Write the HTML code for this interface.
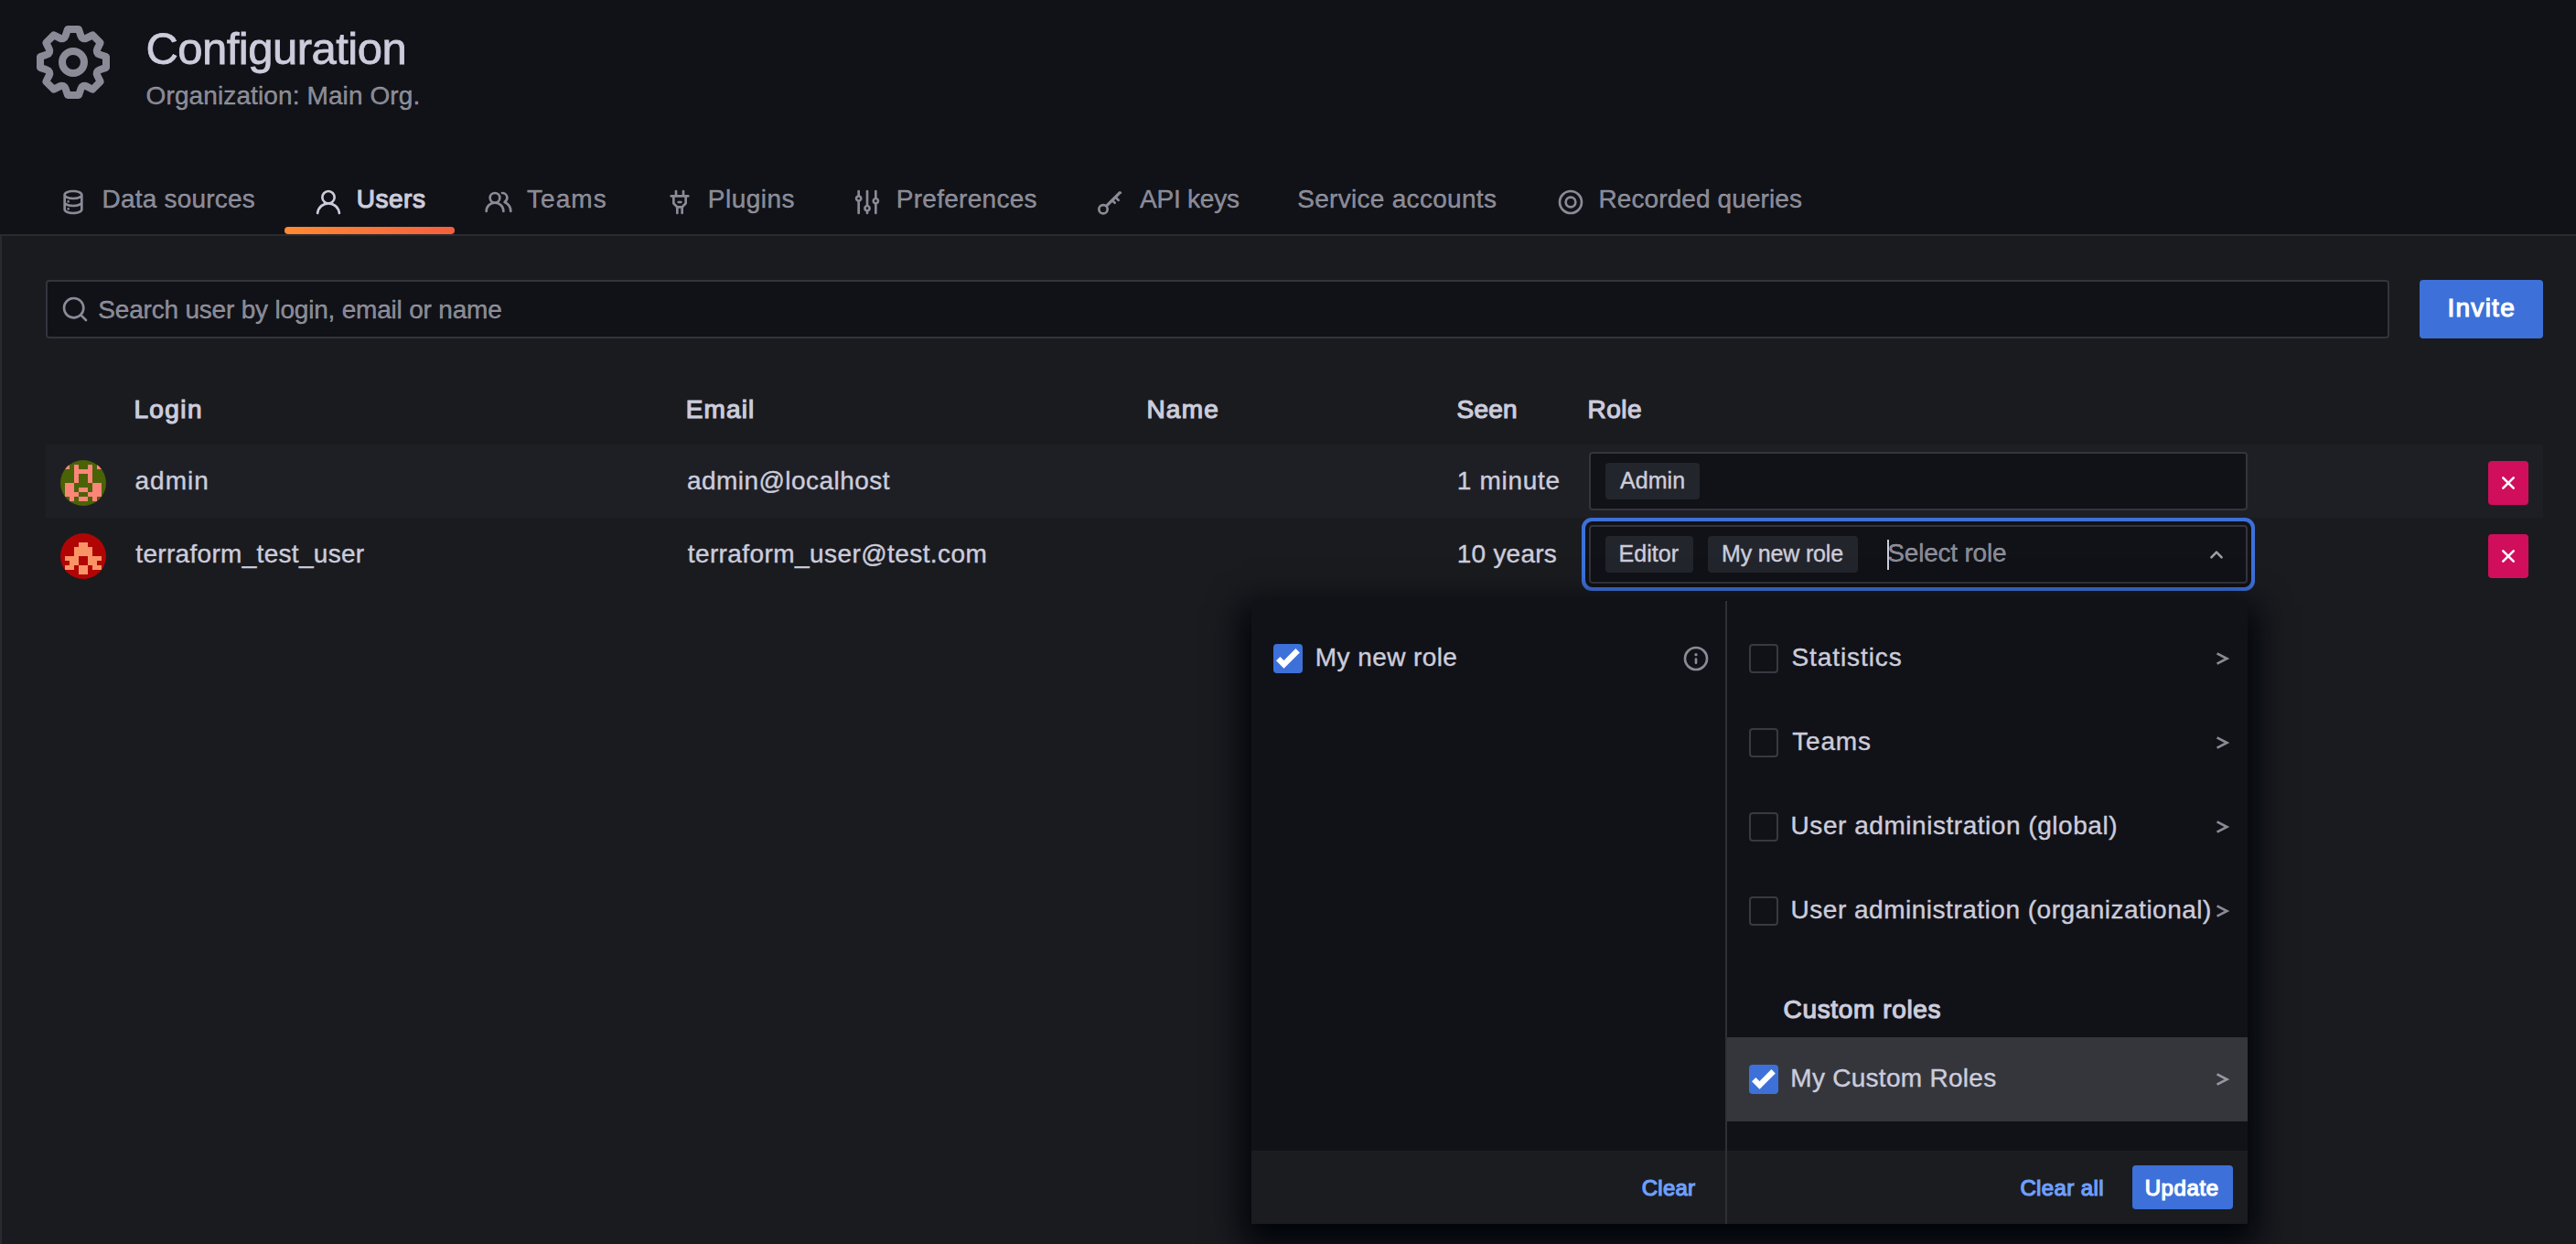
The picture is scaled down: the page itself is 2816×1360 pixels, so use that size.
<!DOCTYPE html>
<html><head><meta charset="utf-8"><style>
html,body{margin:0;padding:0}
body{width:2816px;height:1360px;overflow:hidden;position:relative;background:#1a1b1f;font-family:"Liberation Sans",sans-serif}
.t{position:absolute;line-height:1;white-space:pre;-webkit-text-stroke:0.4px currentColor}
.b{position:absolute}
.ic{position:absolute;overflow:visible}
</style></head><body>
<div class="b" style="left:0px;top:0px;width:2816px;height:256px;background:#111217"></div>
<svg class="ic" style="left:32.0px;top:20.0px;width:96px;height:96px" viewBox="0 0 24 24"><path fill="rgba(204,204,220,0.65)" d="M21.32,9.55l-1.89-.63.89-1.78A1,1,0,0,0,20.13,6L18,3.87a1,1,0,0,0-1.15-.19l-1.78.89-.63-1.89A1,1,0,0,0,13.5,2h-3a1,1,0,0,0-.95.68L8.92,4.57,7.14,3.680A1,1,0,0,0,6,3.87L3.87,6a1,1,0,0,0-.19,1.15l.89,1.78-1.890.63A1,1,0,0,0,2,10.5v3a1,1,0,0,0,.68.95l1.89.63-.89,1.78A1,1,0,0,0,3.87,18L6,20.13a1,1,0,0,0,1.15.19l1.78-.89.63,1.89a1,1,0,0,0,.95.68h3a1,1,0,0,0,.95-.68l.63-1.89,1.78.89A1,1,0,0,0,18,20.13L20.13,18a1,1,0,0,0,.19-1.15l-.89-1.78,1.89-.63A1,1,0,0,0,22,13.5v-3A1,1,0,0,0,21.32,9.55ZM20,12.78l-1.2.4A2,2,0,0,0,17.64,16l.57,1.14-1.1,1.1L16,17.64a2,2,0,0,0-2.79,1.16l-.4,1.2H11.22l-.4-1.2A2,2,0,0,0,8,17.64l-1.14.57-1.1-1.1L6.36,16A2,2,0,0,0,5.2,13.18L4,12.78V11.22l1.2-.4A2,2,0,0,0,6.360,8L5.79,6.89l1.1-1.1L8,6.36A2,2,0,0,0,10.82,5.2l.4-1.2h1.56l.4,1.2A2,2,0,0,0,16,6.36l1.14-.57,1.1,1.1L17.64,8a2,2,0,0,0,1.16,2.79l1.2.4ZM12,8a4,4,0,1,0,4,4A4,4,0,0,0,12,8Zm0,6a2,2,0,1,1,2-2A2,2,0,0,1,12,14Z"/></svg>
<div class="t" style="left:159.4px;top:28.9px;font-size:49px;font-weight:400;color:#ccccdc;letter-spacing:-0.51px;-webkit-text-stroke:0.8px currentColor;">Configuration</div>
<div class="t" style="left:159.6px;top:90.8px;font-size:28px;font-weight:400;color:rgba(204,204,220,0.65);letter-spacing:0.11px;">Organization: Main Org.</div>
<svg class="ic" style="left:63.6px;top:204.8px;width:32px;height:32px" viewBox="0 0 24 24"><path fill="rgba(204,204,220,0.65)" d="M8,16.5a1,1,0,1,0,1,1A1,1,0,0,0,8,16.5ZM12,2C8,2,4,3.37,4,6V18c0,2.63,4,4,8,4s8-1.37,8-4V6C20,3.37,16,2,12,2Zm6,16c0,.71-2.28,2-6,2s-6-1.29-6-2V14.73A13.16,13.16,0,0,0,12,16a13.16,13.16,0,0,0,6-1.27Zm0-6c0,.71-2.28,2-6,2s-6-1.290-6-2V8.73A13.16,13.16,0,0,0,12,10a13.16,13.16,0,0,0,6-1.27ZM12,8C8.28,8,6,6.71,6,6s2.28-2,6-2,6,1.29,6,2S15.72,8,12,8ZM8,10.5a1,1,0,1,0,1,1A1,1,0,0,0,8,10.5Z"/></svg>
<div class="t" style="left:111.6px;top:203.9px;font-size:28px;font-weight:400;color:rgba(204,204,220,0.65);letter-spacing:0.20px;">Data sources</div>
<svg class="ic" style="left:343.0px;top:204.8px;width:32px;height:32px" viewBox="0 0 24 24"><path fill="#ccccdc" d="M15.71,12.71a6,6,0,1,0-7.42,0,10,10,0,0,0-6.22,8.18,1,1,0,0,0,2,.22,8,8,0,0,1,15.9,0,1,1,0,0,0,1,.89h.11a1,1,0,0,0,.88-1.1A10,10,0,0,0,15.71,12.71ZM12,12a4,4,0,1,1,4-4A4,4,0,0,1,12,12Z"/></svg>
<div class="t" style="left:389.8px;top:203.9px;font-size:28px;font-weight:500;color:#ccccdc;letter-spacing:0.50px;-webkit-text-stroke:1.2px currentColor;">Users</div>
<svg class="ic" style="left:528.7px;top:204.8px;width:32px;height:32px" viewBox="0 0 24 24"><path fill="rgba(204,204,220,0.65)" d="M12.3,12.22A4.92,4.92,0,0,0,14,8.5a5,5,0,0,0-10,0,4.92,4.92,0,0,0,1.7,3.72A8,8,0,0,0,1,19.5a1,1,0,0,0,2,0,6,6,0,0,1,12,0,1,1,0,0,0,2,0A8,8,0,0,0,12.3,12.22ZM9,11.5a3,3,0,1,1,3-3A3,3,0,0,1,9,11.5Zm9.74.32A5,5,0,0,0,15,3.5a1,1,0,0,0,0,2,3,3,0,0,1,3,3,3,3,0,0,1-1.5,2.59,1,1,0,0,0-.5.84,1,1,0,0,0,.45.86l.39.26.13.07a7,7,0,0,1,4,6.38,1,1,0,0,0,2,0A9,9,0,0,0,18.74,11.82Z"/></svg>
<div class="t" style="left:576.0px;top:203.9px;font-size:28px;font-weight:400;color:rgba(204,204,220,0.65);letter-spacing:1.04px;">Teams</div>
<svg class="ic" style="left:726.7px;top:204.8px;width:32px;height:32px" viewBox="0 0 24 24"><path fill="rgba(204,204,220,0.65)" d="M19,6H16V3a1,1,0,0,0-2,0V6H10V3A1,1,0,0,0,8,3V6H5A1,1,0,0,0,5,8H6v5a1,1,0,0,0,.29.71L9,16.41V21a1,1,0,0,0,2,0V17h2v4a1,1,0,0,0,2,0V16.41l2.71-2.7A1,1,0,0,0,18,13V8h1a1,1,0,0,0,0-2Zm-3,6.59L13.59,15H10.41L8,12.59V8h8ZM11,13h2a1,1,0,0,0,0-2H11a1,1,0,0,0,0,2Z"/></svg>
<div class="t" style="left:773.8px;top:203.9px;font-size:28px;font-weight:400;color:rgba(204,204,220,0.65);letter-spacing:0.49px;">Plugins</div>
<svg class="ic" style="left:932.3px;top:204.8px;width:32px;height:32px" viewBox="0 0 24 24"><path fill="rgba(204,204,220,0.65)" d="M20,8.18V3a1,1,0,0,0-2,0V8.18a3,3,0,0,0,0,5.64V21a1,1,0,0,0,2,0V13.82a3,3,0,0,0,0-5.64ZM19,12a1,1,0,1,1,1-1A1,1,0,0,1,19,12Zm-6,2.18V3a1,1,0,0,0-2,0V14.18a3,3,0,0,0,0,5.64V21a1,1,0,0,0,2,0V19.82a3,3,0,0,0,0-5.64ZM12,18a1,1,0,1,1,1-1A1,1,0,0,1,12,18ZM6,6.18V3A1,1,0,0,0,4,3V6.18a3,3,0,0,0,0,5.64V21a1,1,0,0,0,2,0V11.82A3,3,0,0,0,6,6.18ZM5,10A1,1,0,1,1,6,9,1,1,0,0,1,5,10Z"/></svg>
<div class="t" style="left:979.8px;top:203.9px;font-size:28px;font-weight:400;color:rgba(204,204,220,0.65);letter-spacing:0.28px;">Preferences</div>
<svg class="ic" style="left:1196.0px;top:204.8px;width:32px;height:32px" viewBox="0 0 24 24"><path fill="rgba(204,204,220,0.65)" d="M21.71,3.29a1,1,0,0,0-1.42,0L9.69,13.89A4.46,4.46,0,0,0,7.5,13.3,4.5,4.5,0,1,0,12,17.8a4.46,4.46,0,0,0-.59-2.19L15,12l1.29,1.29a1,1,0,0,0,1.42,0,1,1,0,0,0,0-1.42L16.41,10.6l1.18-1.17L19.29,11.1a1,1,0,0,0,1.42,0,1,1,0,0,0,0-1.42L19,8l2.71-2.71A1,1,0,0,0,21.71,3.29ZM7.5,20.3A2.5,2.5,0,1,1,10,17.8,2.5,2.5,0,0,1,7.5,20.3Z"/></svg>
<div class="t" style="left:1246.0px;top:203.9px;font-size:28px;font-weight:400;color:rgba(204,204,220,0.65);letter-spacing:-0.21px;">API keys</div>
<div class="t" style="left:1418.2px;top:203.9px;font-size:28px;font-weight:400;color:rgba(204,204,220,0.65);letter-spacing:0.30px;">Service accounts</div>
<svg class="ic" style="left:1700.8px;top:204.8px;width:32px;height:32px" viewBox="0 0 24 24"><path fill="rgba(204,204,220,0.65)" d="M12,2A10,10,0,1,0,22,12,10,10,0,0,0,12,2Zm0,18a8,8,0,1,1,8-8A8,8,0,0,1,12,20ZM12,7a5,5,0,1,0,5,5A5,5,0,0,0,12,7Zm0,8a3,3,0,1,1,3-3A3,3,0,0,1,12,15Z"/></svg>
<div class="t" style="left:1747.5px;top:203.9px;font-size:28px;font-weight:400;color:rgba(204,204,220,0.65);letter-spacing:0.10px;">Recorded queries</div>
<div class="b" style="left:311px;top:248px;width:186px;height:8px;border-radius:4px;background:linear-gradient(90deg,#ff8a33,#f55f3e)"></div>
<div class="b" style="left:0px;top:256px;width:2816px;height:2px;background:#2a2b30"></div>
<div class="b" style="left:0px;top:256px;width:2px;height:1104px;background:#2a2b30"></div>
<div class="b" style="left:50px;top:306px;width:2562px;height:64px;box-sizing:border-box;border:2px solid #33343d;border-radius:4px;background:#111217"></div>
<svg class="ic" style="left:65.9px;top:322.1px;width:32px;height:32px" viewBox="0 0 24 24"><path fill="rgba(204,204,220,0.65)" d="M21.71,20.29,18,16.61A9,9,0,1,0,16.61,18l3.68,3.68a1,1,0,0,0,1.42,0A1,1,0,0,0,21.710,20.29ZM11,18a7,7,0,1,1,7-7A7,7,0,0,1,11,18Z"/></svg>
<div class="t" style="left:107.3px;top:324.8px;font-size:28px;font-weight:400;color:rgba(204,204,220,0.65);letter-spacing:-0.20px;">Search user by login, email or name</div>
<div class="b" style="left:2645px;top:306px;width:135px;height:64px;border-radius:4px;background:#3d71d9"></div>
<div class="t" style="left:2675.5px;top:323.3px;font-size:28px;font-weight:500;color:#ffffff;letter-spacing:1.26px;-webkit-text-stroke:1.2px currentColor;">Invite</div>
<div class="t" style="left:146.4px;top:433.9px;font-size:28px;font-weight:500;color:#ccccdc;letter-spacing:1.40px;-webkit-text-stroke:1.2px currentColor;">Login</div>
<div class="t" style="left:749.8px;top:433.9px;font-size:28px;font-weight:500;color:#ccccdc;letter-spacing:1.12px;-webkit-text-stroke:1.2px currentColor;">Email</div>
<div class="t" style="left:1253.4px;top:433.9px;font-size:28px;font-weight:500;color:#ccccdc;letter-spacing:1.23px;-webkit-text-stroke:1.2px currentColor;">Name</div>
<div class="t" style="left:1592.6px;top:433.9px;font-size:28px;font-weight:500;color:#ccccdc;letter-spacing:0.21px;-webkit-text-stroke:1.2px currentColor;">Seen</div>
<div class="t" style="left:1735.5px;top:433.9px;font-size:28px;font-weight:500;color:#ccccdc;letter-spacing:0.49px;-webkit-text-stroke:1.2px currentColor;">Role</div>
<div class="b" style="left:50px;top:486px;width:2730px;height:80px;background:#1e1f24"></div>
<svg class="ic" style="left:66px;top:503px;width:50px;height:50px" viewBox="0 0 10 10" shape-rendering="crispEdges"><defs><clipPath id="c503"><circle cx="5" cy="5" r="5"/></clipPath></defs><g clip-path="url(#c503)"><rect width="10" height="10" fill="#4a6307"/><rect x="1" y="1" width="1" height="1" fill="#fc8579"/><rect x="3" y="1" width="1" height="1" fill="#fc8579"/><rect x="6" y="1" width="1" height="1" fill="#fc8579"/><rect x="8" y="1" width="1" height="1" fill="#fc8579"/><rect x="3" y="2" width="1" height="1" fill="#fc8579"/><rect x="4" y="2" width="1" height="1" fill="#fc8579"/><rect x="5" y="2" width="1" height="1" fill="#fc8579"/><rect x="6" y="2" width="1" height="1" fill="#fc8579"/><rect x="3" y="3" width="1" height="1" fill="#fc8579"/><rect x="6" y="3" width="1" height="1" fill="#fc8579"/><rect x="3" y="4" width="1" height="1" fill="#fc8579"/><rect x="6" y="4" width="1" height="1" fill="#fc8579"/><rect x="1" y="5" width="1" height="1" fill="#fc8579"/><rect x="2" y="5" width="1" height="1" fill="#fc8579"/><rect x="7" y="5" width="1" height="1" fill="#fc8579"/><rect x="8" y="5" width="1" height="1" fill="#fc8579"/><rect x="1" y="6" width="1" height="1" fill="#fc8579"/><rect x="2" y="6" width="1" height="1" fill="#fc8579"/><rect x="4" y="6" width="1" height="1" fill="#fc8579"/><rect x="5" y="6" width="1" height="1" fill="#fc8579"/><rect x="7" y="6" width="1" height="1" fill="#fc8579"/><rect x="8" y="6" width="1" height="1" fill="#fc8579"/><rect x="1" y="7" width="1" height="1" fill="#fc8579"/><rect x="2" y="7" width="1" height="1" fill="#fc8579"/><rect x="3" y="7" width="1" height="1" fill="#fc8579"/><rect x="6" y="7" width="1" height="1" fill="#fc8579"/><rect x="7" y="7" width="1" height="1" fill="#fc8579"/><rect x="8" y="7" width="1" height="1" fill="#fc8579"/><rect x="2" y="8" width="1" height="1" fill="#fc8579"/><rect x="4" y="8" width="1" height="1" fill="#fc8579"/><rect x="5" y="8" width="1" height="1" fill="#fc8579"/><rect x="7" y="8" width="1" height="1" fill="#fc8579"/></g></svg>
<div class="t" style="left:147.5px;top:511.8px;font-size:28px;font-weight:400;color:#ccccdc;letter-spacing:1.01px;">admin</div>
<div class="t" style="left:750.9px;top:511.8px;font-size:28px;font-weight:400;color:#ccccdc;letter-spacing:0.46px;">admin@localhost</div>
<div class="t" style="left:1592.8px;top:511.8px;font-size:28px;font-weight:400;color:#ccccdc;letter-spacing:0.68px;">1 minute</div>
<div class="b" style="left:1737px;top:494px;width:720px;height:64px;box-sizing:border-box;border:2px solid #33343d;border-radius:4px;background:#111217"></div>
<div class="b" style="left:1755px;top:506px;width:103px;height:40px;border-radius:4px;background:#22252b"></div>
<div class="t" style="left:1771.0px;top:513.1px;font-size:25px;font-weight:400;color:#ccccdc;letter-spacing:0.06px;">Admin</div>
<div class="b" style="left:2720px;top:504px;width:44px;height:48px;border-radius:4px;background:#d10e5c"></div>
<svg class="ic" style="left:2735px;top:521px;width:14px;height:14px" viewBox="0 0 14 14"><path d="M1.3,1.3L12.7,12.7M12.7,1.3L1.3,12.7" stroke="#fff" stroke-width="2.6" stroke-linecap="round"/></svg>
<svg class="ic" style="left:66px;top:583px;width:50px;height:50px" viewBox="0 0 10 10" shape-rendering="crispEdges"><defs><clipPath id="c583"><circle cx="5" cy="5" r="5"/></clipPath></defs><g clip-path="url(#c583)"><rect width="10" height="10" fill="#b10505"/><rect x="4" y="2" width="1" height="1" fill="#fa9466"/><rect x="5" y="2" width="1" height="1" fill="#fa9466"/><rect x="3" y="3" width="1" height="1" fill="#fa9466"/><rect x="4" y="3" width="1" height="1" fill="#fa9466"/><rect x="5" y="3" width="1" height="1" fill="#fa9466"/><rect x="6" y="3" width="1" height="1" fill="#fa9466"/><rect x="3" y="4" width="1" height="1" fill="#fa9466"/><rect x="4" y="4" width="1" height="1" fill="#fa9466"/><rect x="5" y="4" width="1" height="1" fill="#fa9466"/><rect x="6" y="4" width="1" height="1" fill="#fa9466"/><rect x="1" y="5" width="1" height="1" fill="#fa9466"/><rect x="2" y="5" width="1" height="1" fill="#fa9466"/><rect x="3" y="5" width="1" height="1" fill="#fa9466"/><rect x="6" y="5" width="1" height="1" fill="#fa9466"/><rect x="7" y="5" width="1" height="1" fill="#fa9466"/><rect x="8" y="5" width="1" height="1" fill="#fa9466"/><rect x="2" y="6" width="1" height="1" fill="#fa9466"/><rect x="3" y="6" width="1" height="1" fill="#fa9466"/><rect x="6" y="6" width="1" height="1" fill="#fa9466"/><rect x="7" y="6" width="1" height="1" fill="#fa9466"/><rect x="1" y="7" width="1" height="1" fill="#fa9466"/><rect x="2" y="7" width="1" height="1" fill="#fa9466"/><rect x="4" y="7" width="1" height="1" fill="#fa9466"/><rect x="5" y="7" width="1" height="1" fill="#fa9466"/><rect x="7" y="7" width="1" height="1" fill="#fa9466"/><rect x="8" y="7" width="1" height="1" fill="#fa9466"/><rect x="4" y="8" width="1" height="1" fill="#fa9466"/><rect x="5" y="8" width="1" height="1" fill="#fa9466"/></g></svg>
<div class="t" style="left:148.3px;top:591.5px;font-size:28px;font-weight:400;color:#ccccdc;letter-spacing:0.31px;">terraform_test_user</div>
<div class="t" style="left:751.7px;top:591.5px;font-size:28px;font-weight:400;color:#ccccdc;letter-spacing:0.42px;">terraform_user@test.com</div>
<div class="t" style="left:1592.8px;top:591.5px;font-size:28px;font-weight:400;color:#ccccdc;letter-spacing:0.22px;">10 years</div>
<div class="b" style="left:1737px;top:574px;width:720px;height:64px;box-sizing:border-box;border:2px solid #33343d;border-radius:4px;background:#111217;box-shadow:0 0 0 4px #111217,0 0 0 8px #3d71d9"></div>
<div class="b" style="left:1755px;top:586px;width:96px;height:40px;border-radius:4px;background:#22252b"></div>
<div class="t" style="left:1769.6px;top:592.8px;font-size:25px;font-weight:400;color:#ccccdc;letter-spacing:0.04px;">Editor</div>
<div class="b" style="left:1867px;top:586px;width:164px;height:40px;border-radius:4px;background:#22252b"></div>
<div class="t" style="left:1882.0px;top:592.8px;font-size:25px;font-weight:400;color:#ccccdc;letter-spacing:-0.17px;">My new role</div>
<div class="t" style="left:2063.3px;top:590.5px;font-size:28px;font-weight:400;color:rgba(204,204,220,0.65);letter-spacing:-0.20px;">Select role</div>
<div class="b" style="left:2063px;top:590px;width:2px;height:33px;background:#ccccdc"></div>
<svg class="ic" style="left:2415px;top:600px;width:16px;height:12px" viewBox="0 0 16 12"><path d="M2.4,9.3L8,3.7L13.6,9.3" fill="none" stroke="#9d9da8" stroke-width="2.6" stroke-linecap="round" stroke-linejoin="round"/></svg>
<div class="b" style="left:2720px;top:584px;width:44px;height:48px;border-radius:4px;background:#d10e5c"></div>
<svg class="ic" style="left:2735px;top:601px;width:14px;height:14px" viewBox="0 0 14 14"><path d="M1.3,1.3L12.7,12.7M12.7,1.3L1.3,12.7" stroke="#fff" stroke-width="2.6" stroke-linecap="round"/></svg>
<div class="b" style="left:1368px;top:657px;width:1089px;height:681px;background:#111217;box-shadow:0 14px 34px 10px rgb(1,4,9)"></div>
<div class="b" style="left:1368px;top:1258px;width:1089px;height:80px;background:#1a1c20"></div>
<div class="b" style="left:1886px;top:657px;width:2px;height:681px;background:#2f3036"></div>
<div class="b" style="left:1392px;top:704px;width:32px;height:32px;border-radius:4px;background:#3d71d9"></div><svg class="ic" style="left:1392px;top:704px;width:32px;height:32px" viewBox="0 0 32 32"><path d="M5.2,16.1L11.5,22.4L26.6,7.2" fill="none" stroke="#fff" stroke-width="6.2"/></svg>
<div class="t" style="left:1437.8px;top:704.8px;font-size:28px;font-weight:400;color:#ccccdc;letter-spacing:0.42px;">My new role</div>
<svg class="ic" style="left:1838.0px;top:704.0px;width:32px;height:32px" viewBox="0 0 24 24"><path fill="rgba(204,204,220,0.65)" d="M12,2A10,10,0,1,0,22,12,10,10,0,0,0,12,2Zm0,18a8,8,0,1,1,8-8A8,8,0,0,1,12,20Zm0-8.5a1,1,0,0,0-1,1v3a1,1,0,0,0,2,0v-3A1,1,0,0,0,12,11.5Zm0-4a1.25,1.25,0,1,0,1.25,1.25A1.25,1.25,0,0,0,12,7.5Z"/></svg>
<div class="b" style="left:1912px;top:704px;width:32px;height:32px;box-sizing:border-box;border:2px solid #383942;border-radius:4px;background:#111217"></div>
<div class="t" style="left:1958.4px;top:705.3px;font-size:28px;font-weight:400;color:#ccccdc;letter-spacing:0.92px;">Statistics</div>
<svg class="ic" style="left:2420px;top:711.5px;width:20px;height:16px" viewBox="0 0 20 16"><path d="M3.6,2.4L14.4,8L3.6,13.6" fill="none" stroke="rgba(204,204,220,0.65)" stroke-width="2.7"/></svg>
<div class="b" style="left:1912px;top:796px;width:32px;height:32px;box-sizing:border-box;border:2px solid #383942;border-radius:4px;background:#111217"></div>
<div class="t" style="left:1959.2px;top:797.3px;font-size:28px;font-weight:400;color:#ccccdc;letter-spacing:0.84px;">Teams</div>
<svg class="ic" style="left:2420px;top:803.5px;width:20px;height:16px" viewBox="0 0 20 16"><path d="M3.6,2.4L14.4,8L3.6,13.6" fill="none" stroke="rgba(204,204,220,0.65)" stroke-width="2.7"/></svg>
<div class="b" style="left:1912px;top:888px;width:32px;height:32px;box-sizing:border-box;border:2px solid #383942;border-radius:4px;background:#111217"></div>
<div class="t" style="left:1957.6px;top:889.3px;font-size:28px;font-weight:400;color:#ccccdc;letter-spacing:0.54px;">User administration (global)</div>
<svg class="ic" style="left:2420px;top:895.5px;width:20px;height:16px" viewBox="0 0 20 16"><path d="M3.6,2.4L14.4,8L3.6,13.6" fill="none" stroke="rgba(204,204,220,0.65)" stroke-width="2.7"/></svg>
<div class="b" style="left:1912px;top:980px;width:32px;height:32px;box-sizing:border-box;border:2px solid #383942;border-radius:4px;background:#111217"></div>
<div class="t" style="left:1957.6px;top:981.3px;font-size:28px;font-weight:400;color:#ccccdc;letter-spacing:0.51px;">User administration (organizational)</div>
<svg class="ic" style="left:2420px;top:987.5px;width:20px;height:16px" viewBox="0 0 20 16"><path d="M3.6,2.4L14.4,8L3.6,13.6" fill="none" stroke="rgba(204,204,220,0.65)" stroke-width="2.7"/></svg>
<div class="t" style="left:1949.6px;top:1089.9px;font-size:28px;font-weight:500;color:#ccccdc;letter-spacing:0.64px;-webkit-text-stroke:1.2px currentColor;">Custom roles</div>
<div class="b" style="left:1888px;top:1134px;width:569px;height:92px;background:#35363c"></div>
<div class="b" style="left:1912px;top:1164px;width:32px;height:32px;border-radius:4px;background:#3d71d9"></div><svg class="ic" style="left:1912px;top:1164px;width:32px;height:32px" viewBox="0 0 32 32"><path d="M5.2,16.1L11.5,22.4L26.6,7.2" fill="none" stroke="#fff" stroke-width="6.2"/></svg>
<div class="t" style="left:1957.3px;top:1165.3px;font-size:28px;font-weight:400;color:#ccccdc;letter-spacing:0.28px;">My Custom Roles</div>
<svg class="ic" style="left:2420px;top:1171.5px;width:20px;height:16px" viewBox="0 0 20 16"><path d="M3.6,2.4L14.4,8L3.6,13.6" fill="none" stroke="rgba(204,204,220,0.65)" stroke-width="2.7"/></svg>
<div class="t" style="left:1794.8px;top:1286.7px;font-size:24px;font-weight:500;color:#6e9fff;letter-spacing:0.22px;-webkit-text-stroke:1.2px currentColor;">Clear</div>
<div class="t" style="left:2208.4px;top:1286.7px;font-size:24px;font-weight:500;color:#6e9fff;letter-spacing:0.40px;-webkit-text-stroke:1.2px currentColor;">Clear all</div>
<div class="b" style="left:2331px;top:1274px;width:110px;height:48px;border-radius:4px;background:#3d71d9"></div>
<div class="t" style="left:2344.7px;top:1286.7px;font-size:24px;font-weight:500;color:#ffffff;letter-spacing:0.58px;-webkit-text-stroke:1.2px currentColor;">Update</div>
</body></html>
